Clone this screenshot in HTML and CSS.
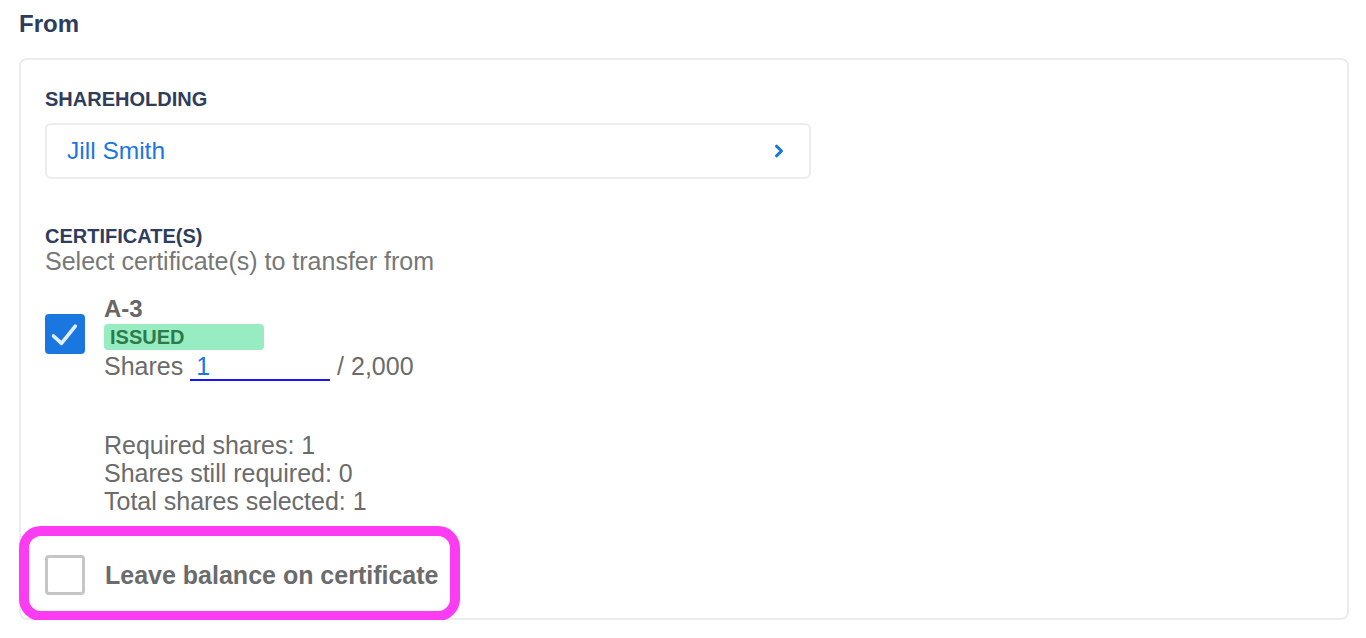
FILE: index.html
```html
<!DOCTYPE html>
<html lang="en">
<head>
<meta charset="utf-8">
<title>Transfer - From</title>
<link rel="stylesheet" href="styles.css">
</head>
<body>
<main class="page">
  <h2 class="section-title">From</h2>
  <section class="card">
    <div class="field">
      <div class="field-label">SHAREHOLDING</div>
      <button class="select-box" type="button">
        <span class="select-value">Jill Smith</span>
        <svg class="chevron" width="10" height="14" viewBox="0 0 10 14" aria-hidden="true">
          <path d="M2.5 2.2 L7.5 7 L2.5 11.8" fill="none" stroke="#1a77e0" stroke-width="3" stroke-linecap="round" stroke-linejoin="round"/>
        </svg>
      </button>
    </div>

    <div class="field certs">
      <div class="field-label">CERTIFICATE(S)</div>
      <div class="field-help">Select certificate(s) to transfer from</div>

      <div class="cert-row">
        <span class="checkbox checked">
          <svg width="40" height="40" viewBox="0 0 40 40" aria-hidden="true">
            <path d="M8.5 22 L16.5 29.3 L30.3 12.2" fill="none" stroke="#e3eefc" stroke-width="3.6" stroke-linecap="round" stroke-linejoin="round"/>
          </svg>
        </span>
        <div class="cert-info">
          <div class="cert-name">A-3</div>
          <div class="badge">ISSUED</div>
          <div class="shares-line">Shares <input class="shares-input" type="text" value="1"> / 2,000</div>
        </div>
      </div>

      <div class="summary">
        <div>Required shares: 1</div>
        <div>Shares still required: 0</div>
        <div>Total shares selected: 1</div>
      </div>

      <div class="balance-row">
        <span class="checkbox unchecked"></span>
        <span class="balance-label">Leave balance on certificate</span>
        <span class="highlight" aria-hidden="true"></span>
      </div>
    </div>
  </section>
</main>
</body>
</html>
```

FILE: styles.css
```css
* { box-sizing: border-box; }

html, body {
  margin: 0;
  padding: 0;
  background: #ffffff;
}

body {
  font-family: "Liberation Sans", Arial, Helvetica, sans-serif;
  color: #6b6b6b;
}

.page {
  padding: 10px 17px 0 19px;
}

.section-title {
  margin: 0;
  font-size: 24px;
  line-height: 28px;
  font-weight: 700;
  color: #2e3d5c;
}

.card {
  margin-top: 20px;
  border: 2px solid #ececec;
  border-radius: 8px;
  padding: 27px 24px 23px 24px;
}

.field-label {
  font-size: 20px;
  line-height: 24px;
  font-weight: 700;
  color: #2e3d5c;
}

.select-box {
  margin-top: 12px;
  width: 766px;
  height: 56px;
  border: 2px solid #ececec;
  border-radius: 6px;
  background: #ffffff;
  padding: 0 25px 0 20px;
  display: flex;
  align-items: center;
  justify-content: space-between;
  font: inherit;
  cursor: pointer;
}

.select-value {
  font-size: 24.5px;
  line-height: 28px;
  color: #1a77e0;
}

.chevron { display: block; }

.certs { margin-top: 45px; }

.field-help {
  font-size: 25px;
  line-height: 27px;
  color: #777777;
}

.cert-row {
  margin-top: 21px;
  display: flex;
  align-items: flex-start;
  gap: 19px;
}

.checkbox {
  flex: none;
  width: 40px;
  height: 40px;
  border-radius: 4px;
  display: block;
}

.checkbox svg { display: block; }

.checkbox.checked {
  margin-top: 18px;
  background: #1a77e0;
}

.checkbox.unchecked {
  border: 3px solid #c6c6c6;
  background: #ffffff;
}

.cert-info {
  display: flex;
  flex-direction: column;
  align-items: flex-start;
}

.cert-name {
  font-size: 24px;
  line-height: 26px;
  font-weight: 700;
  color: #666666;
}

.badge {
  margin-top: 2px;
  width: 160px;
  height: 26px;
  padding: 0 6px;
  border-radius: 4px;
  background: #98ecc1;
  color: #2c7a4c;
  font-size: 20px;
  line-height: 26px;
  font-weight: 700;
}

.shares-line {
  margin-top: 2px;
  font-size: 25px;
  line-height: 28px;
  color: #6b6b6b;
  white-space: pre;
}

.shares-input {
  width: 140px;
  height: 26px;
  margin: 0;
  padding: 0 6px;
  border: none;
  border-bottom: 2px solid #1a14ff;
  border-radius: 0;
  background: transparent;
  font-family: inherit;
  font-size: 25px;
  line-height: 24px;
  color: #1a77e0;
  outline: none;
  vertical-align: baseline;
}

.summary {
  margin-top: 50px;
  padding-left: 59px;
  font-size: 25px;
  line-height: 28px;
  color: #6b6b6b;
}

.balance-row {
  position: relative;
  margin-top: 40px;
  display: flex;
  align-items: center;
  gap: 20px;
}

.balance-label {
  font-size: 25px;
  line-height: 28px;
  font-weight: 700;
  color: #6b6b6b;
}

.highlight {
  position: absolute;
  left: -26px;
  top: -29px;
  width: 441px;
  height: 95px;
  border: 10px solid #fb3cf3;
  border-radius: 22px;
  pointer-events: none;
}
```
